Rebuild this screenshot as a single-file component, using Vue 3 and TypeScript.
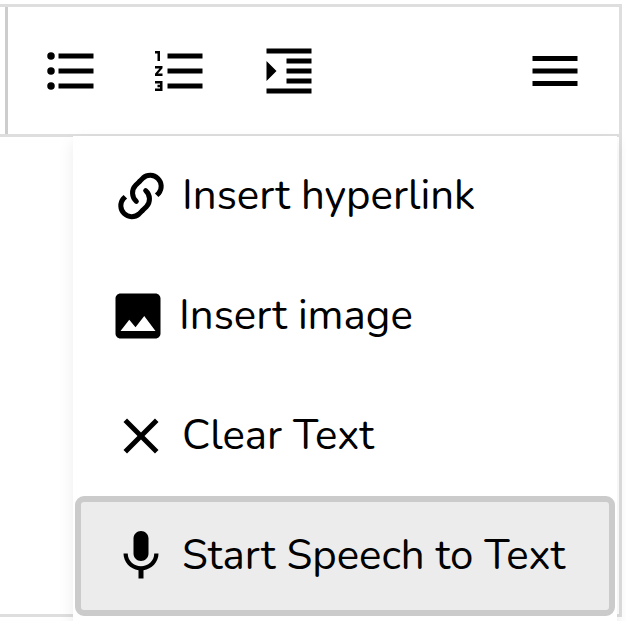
<script setup lang="ts">
import { ref } from 'vue'

type MenuIcon = 'link' | 'image' | 'clear' | 'mic'

interface MenuItem {
  icon: MenuIcon
  label: string
}

const items: MenuItem[] = [
  { icon: 'link', label: 'Insert hyperlink' },
  { icon: 'image', label: 'Insert image' },
  { icon: 'clear', label: 'Clear Text' },
  { icon: 'mic', label: 'Start Speech to Text' },
]

const open = ref(true)
const active = ref(3)
</script>

<template>
  <main class="editor">
    <div class="toolbar" role="toolbar" aria-label="Formatting">
      <div class="group">
        <button class="tool" type="button" aria-label="Bulleted list">
          <svg class="icon" viewBox="0 0 24 24" aria-hidden="true">
            <circle cx="4" cy="6" r="1.5" />
            <circle cx="4" cy="12" r="1.5" />
            <circle cx="4" cy="18" r="1.5" />
            <path d="M7 5h14v2H7zM7 11h14v2H7zM7 17h14v2H7z" />
          </svg>
        </button>
        <button class="tool" type="button" aria-label="Numbered list">
          <svg class="icon" viewBox="0 0 24 24" aria-hidden="true">
            <path
              d="M2 17h2v.5H3v1h1v.5H2v1h3v-4H2v1zm1-9h1V4H2v1h1v3zm-1 3h1.800L2 13.100v.9h3v-1H3.200L5 10.900V10H2v1zm5-6v2h14V5H7zm0 14h14v-2H7v2zm0-6h14v-2H7v2z"
            />
          </svg>
        </button>
        <button class="tool" type="button" aria-label="Increase indent">
          <svg class="icon" viewBox="0 0 24 24" aria-hidden="true">
            <path
              d="M3 21h18v-2H3v2zM3 8v8l4-4-4-4zm8 9h10v-2H11v2zM3 3v2h18V3H3zm8 6h10V7H11v2zm0 4h10v-2H11v2z"
            />
          </svg>
        </button>
      </div>
      <button
        class="tool"
        type="button"
        aria-label="More options"
        aria-haspopup="menu"
        :aria-expanded="open"
        @click="open = !open"
      >
        <svg class="icon" viewBox="0 0 24 24" aria-hidden="true">
          <path d="M3 18h18v-2H3v2zm0-5h18v-2H3v2zm0-7v2h18V6H3z" />
        </svg>
      </button>

      <div v-if="open" class="menu" role="menu">
        <button
          v-for="(item, index) in items"
          :key="item.icon"
          class="item"
          :class="[item.icon, { active: index === active }]"
          type="button"
          role="menuitem"
          @click="active = index"
        >
          <svg v-if="item.icon === 'link'" class="icon" viewBox="-15 -15 180 180" aria-hidden="true">
            <g class="chain">
              <path class="inner" d="M61 91A33 33 0 0 1 59 43L70 32" />
              <path d="M69 33L81 21A33 33 0 0 1 128 67L122 73" />
            </g>
            <g class="chain" transform="rotate(180 75 75)">
              <path class="inner" d="M61 91A33 33 0 0 1 59 43L70 32" />
              <path d="M69 33L81 21A33 33 0 0 1 128 67L122 73" />
            </g>
          </svg>
          <svg v-else-if="item.icon === 'image'" class="icon" viewBox="0 0 24 24" aria-hidden="true">
            <path
              d="M21 19V5c0-1.100-.9-2-2-2H5c-1.100 0-2 .9-2 2v14c0 1.100.9 2 2 2h14c1.100 0 2-.9 2-2zM8.500 13.500l2.500 3.010L14.500 12l4.500 6H5l3.500-4.500z"
            />
          </svg>
          <svg v-else-if="item.icon === 'clear'" class="icon" viewBox="0 0 24 24" aria-hidden="true">
            <path
              d="M19 6.410L17.590 5 12 10.590 6.410 5 5 6.410 10.590 12 5 17.590 6.410 19 12 13.410 17.590 19 19 17.590 13.410 12z"
            />
          </svg>
          <svg v-else class="icon" viewBox="0 0 24 24" aria-hidden="true">
            <path
              d="M12 14c1.660 0 3-1.340 3-3V5c0-1.660-1.340-3-3-3S9 3.340 9 5v6c0 1.660 1.340 3 3 3zm5.300-3c0 3-2.540 5.100-5.300 5.100S6.700 14 6.700 11H5c0 3.410 2.720 6.230 6 6.720V21h2v-3.280c3.280-.48 6-3.300 6-6.720h-1.700z"
            />
          </svg>
          <span>{{ item.label }}</span>
        </button>
      </div>
    </div>
    <div class="page" role="textbox" aria-label="Document" contenteditable="true"></div>
  </main>
</template>

<style>
body {
  background: #fff;
  overflow: hidden;
}
</style>

<style scoped>
.editor {
  box-sizing: border-box;
  display: flex;
  flex-direction: column;
  height: calc(100vh - 8px);
  margin: 4px 4px 4px 0;
  border: 3px solid #dedede;
  border-left: 0;
  font-family: Nunito, Lato, sans-serif;
  color: #000;
}

.toolbar {
  position: relative;
  display: flex;
  align-items: center;
  justify-content: space-between;
  height: 127px;
  padding: 0 34px 0 5px;
  border-bottom: 3px solid #dedede;
}

.group {
  display: flex;
  align-items: center;
  align-self: stretch;
  gap: 49px;
  padding-left: 33px;
  border-left: 3px solid #cdcdcd;
}

.tool {
  display: flex;
  padding: 1px 0 0;
  border: 0;
  background: none;
  cursor: pointer;
}

.icon {
  flex: none;
  width: 60px;
  height: 60px;
  fill: currentColor;
}

.chain {
  fill: none;
  stroke: currentColor;
  stroke-width: 15;
}

.inner {
  stroke-linecap: round;
}

.page {
  flex: 1;
  outline: none;
}

.menu {
  position: absolute;
  z-index: 1;
  top: calc(100% + 2px);
  right: 2px;
  display: flex;
  flex-direction: column;
  box-sizing: border-box;
  width: calc(100% - 75px);
  max-width: 544px;
  padding: 0 2px 12px;
  background: #fff;
  box-shadow: 0 6px 15px rgba(0, 0, 0, 0.08);
}

.item {
  display: flex;
  align-items: center;
  gap: 11px;
  box-sizing: border-box;
  height: 120px;
  padding: 0 30px;
  border: 6px solid transparent;
  border-radius: 9px;
  background: none;
  color: inherit;
  font: inherit;
  font-size: 42px;
  line-height: 56px;
  text-align: left;
  white-space: nowrap;
  cursor: pointer;
}

.item.image {
  padding-left: 27px;
}

.item.active {
  border-color: #cbcbcb;
  background: #ececec;
  outline: none;
}
</style>
